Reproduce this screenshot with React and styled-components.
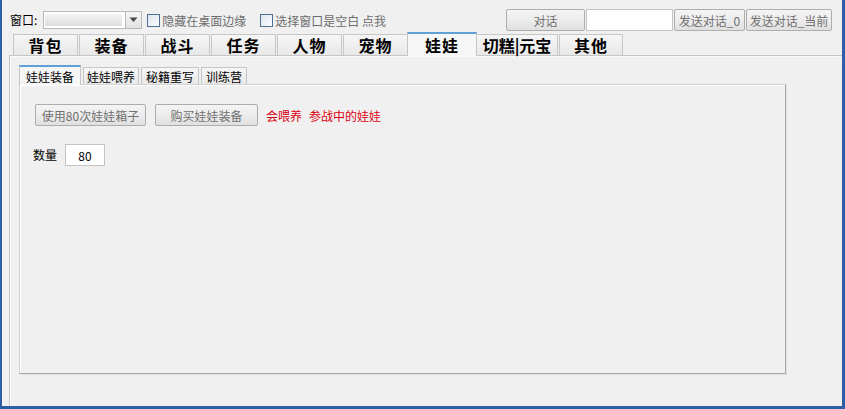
import React from "react";
import styled, { createGlobalStyle, css } from "styled-components";

const Global = createGlobalStyle`
  html, body { margin: 0; padding: 0; background: #f0f0f0; }
  * { box-sizing: border-box; }
`;

const Frame = styled.div`
  width: 845px;
  height: 409px;
  background: #f0f0f0;
  border-left: 2px solid #2e5fa6;
  border-right: 3px solid #2e5fa6;
  border-bottom: 3px solid #2e5fa6;
  box-shadow: inset 1px 0 0 #f7f1f1;
  display: flex;
  flex-direction: column;
  overflow: hidden;
  font-family: "Noto Sans CJK SC", "Noto Sans", sans-serif;
  font-size: 12px;
  color: #000;
`;

const TopBar = styled.div`
  display: flex;
  align-items: center;
  height: 22px;
  margin-top: 9px;
  padding: 0 10px 0 8px;
`;

const Label = styled.span`
  font-size: 12px;
  line-height: 14px;
  color: ${(p) => p.$color || "#000"};
  white-space: nowrap;
  margin-right: ${(p) => p.$mr || 0}px;
`;

const Combo = styled.div`
  display: flex;
  align-items: stretch;
  width: 99px;
  height: 18px;
  margin-left: 6px;
  background: #fff;
  border: 1px solid #b8b8b8;
`;

const ComboValue = styled.div`
  flex: 1;
  margin: 2px 3px 2px 1px;
  background: linear-gradient(#f4f4f4, #dcdcdc);
`;

const ComboButton = styled.div`
  width: 16px;
  border-left: 1px solid #b8b8b8;
  background: linear-gradient(#f6f6f6, #e2e2e2);
  display: flex;
  align-items: center;
  justify-content: center;
`;

const Check = styled.label`
  display: flex;
  align-items: center;
  margin-left: ${(p) => p.$ml}px;
  color: #6d6d6d;
  white-space: nowrap;
`;

const Box = styled.span`
  width: 13px;
  height: 13px;
  margin-right: 2px;
  border: 1px solid #4f6e93;
  background: linear-gradient(135deg, #dfe6ee, #fbfcfd);
`;

const Spacer = styled.div`
  flex: 1;
`;

const Button = styled.div`
  height: ${(p) => p.$h || 22}px;
  width: ${(p) => p.$w}px;
  margin-left: ${(p) => p.$ml || 0}px;
  display: flex;
  align-items: center;
  justify-content: center;
  border: 1px solid #adadad;
  border-radius: 2px;
  background: linear-gradient(#f4f4f4 0%, #ececec 50%, #e0e0e0 100%);
  color: #707070;
  font-size: 12px;
  white-space: nowrap;
`;

const TextInput = styled.div`
  width: ${(p) => p.$w}px;
  height: 22px;
  margin-left: ${(p) => p.$ml || 0}px;
  background: #fff;
  border: 1px solid #c4c4c4;
  display: flex;
  align-items: center;
  justify-content: center;
  font-size: 12px;
  color: #000;
`;

const TabArea = styled.div`
  flex: 1;
  display: flex;
  flex-direction: column;
  margin-left: 7px;
`;

const MainStrip = styled.div`
  display: flex;
  align-items: flex-end;
  height: 24px;
  padding-left: 4px;
`;

const MainTab = styled.div`
  position: relative;
  width: ${(p) => p.$w}px;
  height: 21px;
  margin-right: 1px;
  display: flex;
  align-items: center;
  justify-content: center;
  border: 1px solid #c6c6c6;
  border-bottom: none;
  background: linear-gradient(#f6f6f6, #e8e8e8);
  font-size: 16px;
  font-weight: 700;
  letter-spacing: ${(p) => p.$ls}px;
  white-space: nowrap;
  ${(p) =>
    p.$active &&
    css`
      z-index: 1;
      height: 24px;
      margin: 0 -1px -1px -2px;
      border-top: 2px solid #5fa0d8;
      background: #f6f6f6;
      padding-bottom: 1px;
    `}
`;

const MainPanel = styled.div`
  flex: 1;
  border-top: 1px solid #c6c6c6;
  border-left: 1px solid #c6c6c6;
  box-shadow: inset 1px 1px 0 #fbfbfb;
  padding: 9px 0 0 9px;
  display: flex;
  flex-direction: column;
`;

const SubStrip = styled.div`
  display: flex;
  align-items: flex-end;
  height: 19px;
`;

const SubTab = styled.div`
  position: relative;
  height: 17px;
  padding: 0 ${(p) => p.$px || 4}px;
  margin-right: 2px;
  display: flex;
  align-items: center;
  border: 1px solid #c6c6c6;
  border-bottom: none;
  background: linear-gradient(#f6f6f6, #e9e9e9);
  font-size: 12px;
  ${(p) =>
    p.$active &&
    css`
      z-index: 1;
      height: 20px;
      margin-bottom: -1px;
      border-top: 2px solid #5fa0d8;
      background: #f6f6f6;
    `}
`;

const SubPanel = styled.div`
  width: 767px;
  height: 290px;
  border: 1px solid #d2d2d2;
  border-right-color: #a9a9a9;
  border-bottom-color: #a9a9a9;
  box-shadow: inset 1px 1px 0 #ffffff, 1px 1px 0 #e0e0e0;
  padding: 19px 0 0 15px;
  display: flex;
  flex-direction: column;
  gap: 18px;
`;

const Row = styled.div`
  display: flex;
  align-items: center;
  margin-left: ${(p) => p.$ml || 0}px;
`;

const Red = styled.span`
  color: #dc0010;
  font-size: 12px;
  margin-left: 8px;
  white-space: nowrap;
`;

const RedGap = styled.span`
  display: inline-block;
  width: 7px;
`;

function Arrow() {
  return (
    <svg width="9" height="6" viewBox="0 0 9 6">
      <path d="M0.5 0.5 L8.5 0.5 L4.5 5 Z" fill="#4a4a4a" />
    </svg>
  );
}

const mainTabs = [
  { t: "背包", w: 65, ls: 1 },
  { t: "装备", w: 65, ls: 1 },
  { t: "战斗", w: 65, ls: 1 },
  { t: "任务", w: 65, ls: 1 },
  { t: "人物", w: 65, ls: 1 },
  { t: "宠物", w: 65, ls: 1 },
  { t: "娃娃", w: 70, ls: 1, active: true },
  { t: "切糕|元宝", w: 82, ls: 0 },
  { t: "其他", w: 64, ls: 1 },
];

const subTabs = [
  { t: "娃娃装备", active: true, px: 6 },
  { t: "娃娃喂养", px: 3 },
  { t: "秘籍重写", px: 4 },
  { t: "训练营", px: 4 },
];

export default function App() {
  return (
    <>
      <Global />
      <Frame>
        <TopBar>
          <Label>窗口:</Label>
          <Combo>
            <ComboValue />
            <ComboButton>
              <Arrow />
            </ComboButton>
          </Combo>
          <Check $ml={5}>
            <Box />
            隐藏在桌面边缘
          </Check>
          <Check $ml={14}>
            <Box />
            选择窗口是空白 点我
          </Check>
          <Spacer />
          <Button $w={79}>对话</Button>
          <TextInput $w={87} $ml={1} />
          <Button $w={71} $ml={1}>发送对话_0</Button>
          <Button $w={86} $ml={1}>发送对话_当前</Button>
        </TopBar>
        <TabArea>
          <MainStrip>
            {mainTabs.map((tab) => (
              <MainTab key={tab.t} $w={tab.w} $ls={tab.ls} $active={tab.active}>
                {tab.t}
              </MainTab>
            ))}
          </MainStrip>
          <MainPanel>
            <SubStrip>
              {subTabs.map((tab) => (
                <SubTab key={tab.t} $active={tab.active} $px={tab.px}>
                  {tab.t}
                </SubTab>
              ))}
            </SubStrip>
            <SubPanel>
              <Row>
                <Button $w={111}>使用80次娃娃箱子</Button>
                <Button $w={103} $ml={9}>购买娃娃装备</Button>
                <Red>
                  会喂养
                  <RedGap />
                  参战中的娃娃
                </Red>
              </Row>
              <Row $ml={-2}>
                <Label $mr={8}>数量</Label>
                <TextInput $w={40}>80</TextInput>
              </Row>
            </SubPanel>
          </MainPanel>
        </TabArea>
      </Frame>
    </>
  );
}
